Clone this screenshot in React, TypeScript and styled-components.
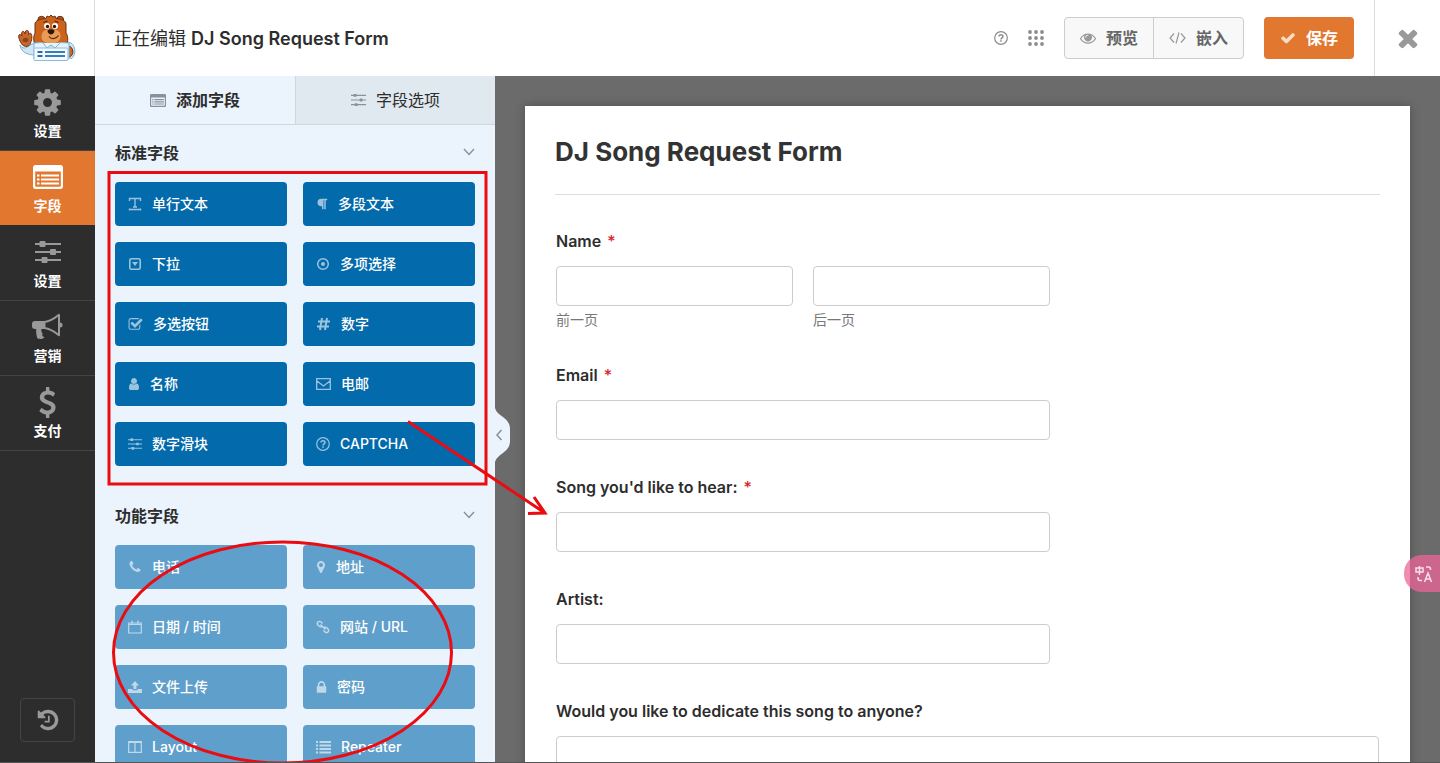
import React, { useId } from 'react';
import styled, { createGlobalStyle, css } from 'styled-components';
import { FaParagraph } from 'react-icons/fa';

const GlobalStyle = createGlobalStyle`
  * { box-sizing: border-box; }
  html, body, #root { height: 100%; }
  body {
    margin: 0;
    overflow: hidden;
    font-family: Inter, "Noto Sans CJK SC", sans-serif;
    color: #2d2d2d;
  }
  button, input, textarea { font: inherit; margin: 0; }
  button { cursor: pointer; border: 0; background: none; padding: 0; color: inherit; }
  svg { display: block; flex: none; }
`;

/* ---------- icons ---------- */

type GlyphProps = { d: string; size: number; width?: number; box?: string };
const Glyph = ({ d, size, width = size, box = '0 0 1792 1792' }: GlyphProps) => (
  <svg width={width} height={size} viewBox={box} fill="currentColor" aria-hidden="true">
    <path d={d} />
  </svg>
);

const P = {
  cog: 'M1152 896q0-106-75-181t-181-75-181 75-75 181 75 181 181 75 181-75 75-181zm512-109v222q0 12-8 23t-20 13l-185 28q-19 54-39 91 35 50 107 138 10 12 10 25t-9 23q-27 37-99 108t-94 71q-12 0-26-9l-138-108q-44 23-91 38-16 136-29 186-7 28-36 28h-222q-14 0-24.5-8.5t-11.5-21.5l-28-184q-49-16-90-37l-141 107q-10 9-25 9-14 0-25-11-126-114-165-168-7-10-7-23 0-12 8-23 15-21 51-66.5t54-70.5q-27-50-41-99l-183-27q-13-2-21-12.5t-8-23.5v-222q0-12 8-23t19-13l186-28q14-46 39-92-40-57-107-138-10-12-10-24 0-10 9-23 26-36 98.5-107.5t94.5-71.5q13 0 26 10l138 107q44-23 91-38 16-136 29-186 7-28 36-28h222q14 0 24.5 8.5t11.5 21.5l28 184q49 16 90 37l142-107q9-9 24-9 13 0 25 10 129 119 165 170 7 8 7 22 0 12-8 23-15 21-51 66.5t-54 70.5q26 50 41 98l183 28q13 2 21 12.5t8 23.5z',
  check: 'M1671 566q0 40-28 68l-724 724-136 136q-28 28-68 28t-68-28l-136-136-362-362q-28-28-28-68t28-68l136-136q28-28 68-28t68 28l294 295 656-657q28-28 68-28t68 28l136 136q28 28 28 68z',
  times: 'M1490 1322q0 40-28 68l-136 136q-28 28-68 28t-68-28l-294-294-294 294q-28 28-68 28t-68-28l-136-136q-28-28-28-68t28-68l294-294-294-294q-28-28-28-68t28-68l136-136q28-28 68-28t68 28l294 294 294-294q28-28 68-28t68 28l136 136q28 28 28 68t-28 68l-294 294 294 294q28 28 28 68z',
  eye: 'M1664 960q-152-236-381-353 61 104 61 225 0 185-131.5 316.5t-316.5 131.5-316.5-131.5-131.5-316.5q0-121 61-225-229 117-381 353 133 205 333.5 326.5t434.5 121.5 434.5-121.5 333.5-326.5zm-720-384q0-20-14-34t-34-14q-125 0-214.5 89.5t-89.5 214.5q0 20 14 34t34 14 34-14 14-34q0-86 61-147t147-61q20 0 34-14t14-34zm848 384q0 34-20 69-140 230-376.5 368.5t-499.5 138.5-499.5-139-376.5-368q-20-35-20-69t20-69q140-229 376.5-368t499.5-139 499.5 139 376.5 368q20 35 20 69z',
  history: 'M1664 896q0 156-61 298t-164 245-245 164-298 61q-172 0-327-72.5t-264-204.5q-7-10-6.5-22.5t8.5-20.5l137-138q10-9 25-9 16 2 23 12 73 95 179 147t225 52q104 0 198.5-40.5t163.5-109.5 109.5-163.5 40.5-198.5-40.5-198.5-109.5-163.5-163.5-109.5-198.5-40.5q-98 0-188 35.5t-160 101.5l137 138q31 30 14 69-17 40-59 40h-448q-26 0-45-19t-19-45v-448q0-42 40-59 39-17 69 14l130 129q107-101 244.5-156.5t284.5-55.5q156 0 298 61t245 164 164 245 61 298zm-640-288v448q0 14-9 23t-23 9h-320q-14 0-23-9t-9-23v-64q0-14 9-23t23-9h224v-352q0-14 9-23t23-9h64q14 0 23 9t9 23z',
  marker: 'M1152 640q0-106-75-181t-181-75-181 75-75 181 75 181 181 75 181-75 75-181zm256 0q0 109-33 179l-364 774q-16 33-47.5 52t-67.5 19-67.5-19-46.5-52l-365-774q-33-70-33-179 0-212 150-362t362-150 362 150 150 362z',
  user: 'M1536 1399q0 109-62.5 187t-150.5 78h-854q-88 0-150.5-78t-62.5-187q0-85 8.5-160.5t31.5-152 58.5-131 94-89 134.5-34.5q131 128 313 128t313-128q76 0 134.5 34.5t94 89 58.5 131 31.5 152 8.5 160.5zm-256-887q0 159-112.5 271.5t-271.5 112.5-271.5-112.5-112.5-271.5 112.5-271.5 271.5-112.5 271.5 112.5 112.5 271.5z',
  phone: 'M1600 1240q0 27-10 70.5t-21 68.5q-21 50-122 106-94 51-186 51-27 0-53-3.5t-57.5-12.5-47-14.5-55.5-20.5-49-18q-98-35-175-83-127-79-264-216t-216-264q-48-77-83-175-3-9-18-49t-20.5-55.5-14.5-47-12.5-57.5-3.5-53q0-92 51-186 56-101 106-122 25-11 68.5-21t70.5-10q14 0 21 3 18 6 53 76 11 19 30 54t35 63.5 31 53.5q3 4 17.5 25t21.5 35.5 7 28.5q0 20-28.5 50t-62 55-62 53-28.5 46q0 9 5 22.5t8.5 20.5 14 24 11.5 19q76 137 174 235t235 174q2 1 19 11.5t24 14 20.5 8.5 22.5 5q18 0 46-28.5t53-62 55-62 50-28.5q14 0 28.5 7t35.5 21.5 25 17.5q25 15 53.5 31t63.5 35 54 30q70 35 76 53 3 7 3 21z',
  lock: 'M640 768h512v-192q0-106-75-181t-181-75-181 75-75 181v192zm832 96v576q0 40-28 68t-68 28h-960q-40 0-68-28t-28-68v-576q0-40 28-68t68-28h32v-192q0-184 132-316t316-132 316 132 132 316v192h32q40 0 68 28t28 68z',
  checkSquare: 'M1472 930v318q0 119-84.5 203.5t-203.5 84.5h-832q-119 0-203.5-84.5t-84.5-203.5v-832q0-119 84.5-203.5t203.5-84.5h832q63 0 117 25 15 7 18 23 3 17-9 29l-49 49q-10 10-23 10-3 0-9-2-23-6-45-6h-832q-66 0-113 47t-47 113v832q0 66 47 113t113 47h832q66 0 113-47t47-113v-254q0-13 9-22l64-64q10-10 23-10 6 0 12 3 20 8 20 29zm231-489l-814 814q-24 24-57 24t-57-24l-430-430q-24-24-24-57t24-57l110-110q24-24 57-24t57 24l263 263 647-647q24-24 57-24t57 24l110 110q24 24 24 57t-24 57z',
  dollar: 'M1362 1185q0 153-99.5 263.5t-258.5 136.5v175q0 14-9 23t-23 9h-135q-13 0-22.5-9.5t-9.5-22.5v-175q-66-9-127.5-31t-101.5-44.5-74-48-46.5-37.5-17.5-18q-17-21-2-41l103-135q7-10 23-12 15-2 24 9l2 2q113 99 243 125 37 8 74 8 81 0 142.5-43t61.5-122q0-28-15-53t-33.5-42-58.5-37.5-66-32-80-32.5q-39-16-61.5-25t-61.5-26.5-62.5-31-56.5-35.5-53.5-42.5-43.5-49-35.5-58-21-66.5-8.5-78q0-138 98-242t255-134v-180q0-13 9.5-22.5t22.5-9.5h135q14 0 23 9t9 23v176q57 6 110.5 23t87 33.5 63.5 37.5 39 29 15 14q17 18 5 38l-81 146q-8 15-23 16-14 3-27-7-3-3-14.5-12t-39-26.5-58.5-32-74.5-26-85.5-11.5q-95 0-155 43t-60 111q0 26 8.5 48t29.5 41.5 39.5 33 56 31 60.5 27 70 27.5q53 20 81 31.5t76 35 75.5 42.5 62 50 53 63.5 31.5 76.5 13 94z',
};

const FormIcon = ({ width, height }: { width: number; height: number }) => (
  <svg width={width} height={height} viewBox="0 0 30 24" preserveAspectRatio="none" fill="none" aria-hidden="true">
    <rect x="1" y="1" width="28" height="22" rx="2.500" stroke="currentColor" strokeWidth="2.400" />
    <path d="M1 1h28v5.500H1z" fill="currentColor" />
    <path d="M4 10.500h2.500M8 10.500h18M4 14.500h2.500M8 14.500h18M4 18.500h2.500M8 18.500h18" stroke="currentColor" strokeWidth="2.200" />
  </svg>
);

const Sliders = ({ width, height, knob = 6 }: { width: number; height: number; knob?: number }) => (
  <svg width={width} height={height} viewBox="0 0 26 24" fill="currentColor" aria-hidden="true">
    <path d="M0 3h26v2H0zM0 11h26v2H0zM0 19h26v2H0z" />
    <rect x="4.500" y={4 - knob / 2} width={knob} height={knob} rx="1" />
    <rect x="15" y={12 - knob / 2} width={knob} height={knob} rx="1" />
    <rect x="6.500" y={20 - knob / 2} width={knob} height={knob} rx="1" />
  </svg>
);

const Bullhorn = () => (
  <svg width="31" height="28" viewBox="0 0 31 28" fill="currentColor" aria-hidden="true">
    <path d="M3 8h9v8H9.500c-.6 2 .2 3 .8 4 .6 1.100-.6 1.800.3 2.900.8.900 1.300.9 1.800 1.300-1.300 2.200-6 2.300-7.300.6C4.400 22 3.800 18.500 4.300 16H3a3 3 0 0 1-3-3v-2a3 3 0 0 1 3-3z" />
    <path d="M12.500 9C18 8.500 23 5 27 1.800v20.400C23 19 18 15.500 12.500 15z" fill="none" stroke="currentColor" strokeWidth="2" strokeLinejoin="round" />
    <path d="M28 9.500a2.500 2.500 0 0 1 0 5z" />
  </svg>
);

const Question = ({ size }: { size: number }) => (
  <svg width={size} height={size} viewBox="0 0 16 16" fill="none" stroke="currentColor" aria-hidden="true">
    <circle cx="8" cy="8" r="7.200" strokeWidth="1.400" />
    <path d="M5.700 6.300C5.800 3.400 10.300 3.500 10.300 6.200c0 1.600-2.300 1.700-2.300 3.500" strokeWidth="1.700" />
    <path d="M8 10.700v1.700" strokeWidth="1.800" />
  </svg>
);

const Line = ({ w = 14, h = 14, d, sw = 1.4 }: { w?: number; h?: number; d: string; sw?: number }) => (
  <svg width={w} height={h} viewBox={`0 0 ${w} ${h}`} fill="none" stroke="currentColor" strokeWidth={sw} aria-hidden="true">
    <path d={d} />
  </svg>
);

const Bear = () => (
  <svg width="58" height="48" viewBox="0 0 58 48" aria-hidden="true">
    <path d="M2 31c2 4 6 4 10 0l5-2v12C9 41 3 38 2 31zM50 28c8 1 9 13 3 17l-3-4z" fill="#cfe6f5" stroke="#7fb3d0" />
    <g stroke="#6b3013" strokeWidth="1">
      <path d="M4.500 31C2 28 0 23 1 21c1-1 2 0 3 1-1-3 0-5 1.500-4.500C6.500 18 7 19 7 20c0-3 1-4 2.500-3.500C11 17 10.500 19 10.500 20.500c1-2 3-1.500 3 .5 1 1 0 8-2.500 10.500-2 1.500-5 1-6.500-.5z" fill="#c9672b" />
      <path d="M50.500 32c6 1 6 11-.5 11z" fill="#c9672b" />
      <circle cx="23.500" cy="6" r="3.700" fill="#b4541f" />
      <circle cx="42" cy="6" r="3.700" fill="#b4541f" />
      <path d="M17 10c0-3 4-5 11-5.500L29 2l2 1 2-2 2 2 2-1 1 2.500c6 .5 10 2.500 10 5.500v9c3 4 2 12-2 13H19c-4-2-4-9-2-13z" fill="#cc631d" />
    </g>
    <path d="M4.500 26c1-3 6-3 6 0 0 3-6 3-6 0z" fill="#8a431b" />
    <path d="M16 29c4 0 7-1 10 0l7 3 7-3c4-1 7 0 11 0v16H16z" fill="#e6f4fb" stroke="#7fb3d0" />
    <path d="M23.500 23c0-6 4-8 9.500-8s9.500 2 9.500 7-4 7.500-9.500 7.500S23.500 27 23.500 23z" fill="#e99a55" />
    <path d="M25 29l4 5 4-3 4 3 5-5" fill="#e6f4fb" stroke="#7fb3d0" />
    <g fill="#fff"><circle cx="29" cy="12" r="3" /><circle cx="37" cy="12" r="3" /></g>
    <g fill="#2a160b">
      <circle cx="29.500" cy="12.500" r="1.700" /><circle cx="36.500" cy="12.500" r="1.700" />
      <path d="M29.500 17c0-2.500 7-2.500 7 0 0 2-2.500 3.500-3.500 3.500S29.500 19 29.500 17z" />
    </g>
    <path d="M25.500 8.500l4-1.500M36.500 7l4 1.500M31 22.500c2 3 7 3 9.500-1" fill="none" stroke="#5a260c" strokeWidth="1.300" />
    <rect x="16" y="34" width="34" height="12.500" rx="1" fill="#f2fafe" stroke="#8fbdd8" />
    <path d="M19.500 38h5M19.500 42h5" stroke="#2d6ca8" strokeWidth="1.800" />
    <path d="M27 38h20M27 42h20" stroke="#3a7fbc" strokeWidth="1.800" />
  </svg>
);

/* ---------- layout ---------- */

const Builder = styled.div`
  position: relative;
  display: flex;
  flex-direction: column;
  height: 100vh;
  overflow: hidden;
  border-bottom: 1px solid #555;
`;

const Header = styled.header`
  display: flex;
  flex: none;
  align-items: center;
  height: 76px;
  background: #fff;
`;

const Logo = styled.div`
  display: flex;
  align-items: center;
  justify-content: center;
  width: 95px;
  height: 100%;
  border-right: 1px solid #dcdcdc;
`;

const HeaderTitle = styled.div`
  flex: 1;
  padding: 2px 0 0 19px;
  font-size: 18px;
  line-height: 24px;
  strong { font-weight: 600; }
`;

const HeaderTools = styled.div`
  display: flex;
  align-items: center;
  gap: 20px;
  padding-right: 20px;
  color: #8c8c8c;
`;

const IconButton = styled.button`
  display: flex;
  align-items: center;
  justify-content: center;
`;

const ButtonGroup = styled.div`
  display: flex;
  height: 42px;
  border: 1px solid #ccc;
  border-radius: 4px;
  background: #f8f8f8;
  overflow: hidden;
`;

const GroupButton = styled.button`
  display: flex;
  align-items: center;
  justify-content: center;
  gap: 10px;
  width: 88px;
  color: #999;
  font-size: 16px;
  font-weight: 600;
  & + & { width: 90px; border-left: 1px solid #ccc; }
  span { padding-bottom: 2px; color: #666; }
`;

const SaveButton = styled.button`
  display: flex;
  align-items: center;
  justify-content: center;
  gap: 10px;
  width: 90px;
  height: 42px;
  border-radius: 4px;
  background: #e27730;
  color: #fbdcc4;
  font-size: 16px;
  font-weight: 600;
  span { padding-bottom: 2px; color: #fff; }
`;

const CloseButton = styled(IconButton)`
  width: 66px;
  height: 100%;
  border-left: 1px solid #dcdcdc;
  color: #999;
`;

const Body = styled.div`
  display: flex;
  flex: 1;
  min-height: 0;
`;

const Rail = styled.nav`
  display: flex;
  flex: none;
  flex-direction: column;
  align-items: center;
  width: 95px;
  padding-bottom: 20px;
  background: #2d2d2d;
`;

const RailItem = styled.button<{ $active?: boolean }>`
  display: flex;
  flex-direction: column;
  align-items: center;
  width: 100%;
  height: 75px;
  padding-top: 10px;
  border-bottom: 1px solid #444;
  color: #999;
  font-size: 14px;
  line-height: 20px;
  font-weight: 600;
  span { color: #fff; }
  ${(p) => p.$active && css`
    background: #e27730;
    color: #fff;
    border-color: #2d2d2d;
  `}
`;

const RailIcon = styled.i`
  display: flex;
  align-items: center;
  justify-content: center;
  height: 32px;
  margin-bottom: 3px;
`;

const HistoryButton = styled(IconButton)`
  width: 55px;
  height: 44px;
  margin-top: auto;
  border: 1px solid #444;
  border-radius: 4px;
  color: #999;
`;

const Panel = styled.aside`
  position: relative;
  flex: none;
  width: 400px;
  background: #ebf3fc;
`;

const PanelScroll = styled.div`
  height: 100%;
  overflow: hidden;
`;

const Tabs = styled.div`
  display: grid;
  grid-template-columns: 1fr 1fr;
  height: 49px;
  border-bottom: 1px solid #ced7e0;
`;

const Tab = styled.button<{ $active?: boolean }>`
  display: flex;
  align-items: center;
  justify-content: center;
  gap: 10px;
  color: #86919e;
  font-size: 16px;
  background: ${(p) => (p.$active ? 'transparent' : '#e0e8f0')};
  border-left: ${(p) => (p.$active ? '0' : '1px solid #ced7e0')};
  font-weight: ${(p) => (p.$active ? 600 : 400)};
  span { padding-bottom: 2px; color: #2d2d2d; }
`;

const Group = styled.section`
  padding: 0 20px 22px;
`;

const GroupHeading = styled.button`
  display: flex;
  align-items: center;
  justify-content: space-between;
  width: 100%;
  height: 57px;
  padding-bottom: 3px;
  font-size: 16px;
  font-weight: 600;
  color: #2d2d2d;
  svg { color: #86919e; }
`;

const FieldGrid = styled.div`
  display: grid;
  grid-template-columns: 1fr 1fr;
  gap: 16px;
`;

const FieldButton = styled.button<{ $light?: boolean }>`
  display: flex;
  align-items: center;
  gap: 10px;
  height: 44px;
  padding-left: 13px;
  border-radius: 4px;
  background: ${(p) => (p.$light ? '#5f9fcb' : '#036aab')};
  color: ${(p) => (p.$light ? '#bfd9ea' : '#9bc3dd')};
  font-size: 14px;
  font-weight: 500;
  span { padding-bottom: 2px; color: #fff; }
`;

const Handle = styled.button`
  position: absolute;
  top: 332px;
  left: 100%;
  color: #86919e;
`;

const Main = styled.main`
  flex: 1;
  min-width: 0;
  padding: 30px 30px 0;
  overflow: hidden;
  background: #6b6b6b;
`;

const Sheet = styled.form`
  min-height: 100%;
  padding: 30px;
  background: #fff;
  box-shadow: 0 0 10px rgba(0, 0, 0, 0.25);
`;

const SheetTitle = styled.h1`
  margin: 0;
  height: 59px;
  border-bottom: 1px solid #ddd;
  font-size: 26px;
  line-height: 32px;
  font-weight: 700;
  color: #333;
`;

const Fields = styled.div`
  display: flex;
  flex-direction: column;
  gap: 37px;
  padding: 36px 1px 0;
`;

const Field = styled.div`
  display: flex;
  flex-direction: column;
`;

const Label = styled.label`
  margin-bottom: 15px;
  font-size: 16px;
  line-height: 20px;
  font-weight: 600;
  color: #2d2d2d;
  em { margin-left: 2px; color: #d6252b; font-style: normal; font-weight: 500; }
`;

const box = css`
  display: block;
  height: 40px;
  padding: 0 10px;
  border: 1px solid #ccc;
  border-radius: 4px;
  background: #fff;
`;
const Input = styled.input`${box} width: 60%;`;
const TextArea = styled.textarea`${box} width: 100%; height: 120px; resize: none;`;

const NameRow = styled.div`
  display: grid;
  grid-template-columns: 1fr 1fr;
  gap: 20px;
  width: 60%;
  ${Input} { width: 100%; }
`;

const SubLabel = styled.label`
  display: block;
  margin-top: 5px;
  font-size: 14px;
  line-height: 17px;
  color: #777;
`;

const Translate = styled.button`
  position: absolute;
  right: 0;
  top: 555px;
  display: flex;
  align-items: center;
  width: 36px;
  height: 37px;
  padding-left: 11px;
  border-radius: 18px 0 0 18px;
  background: rgba(236, 100, 152, 0.75);
  color: #f6dfe8;
`;

const Markup = styled.svg`
  position: absolute;
  top: 0;
  left: 0;
  pointer-events: none;
`;

/* ---------- data ---------- */

const standard: [React.ReactNode, string][] = [
  [<Line d="M1.500 4V1.500h11V4M7 1.500v8.500M5 10h4M1 12.500h12M1.500 11.500v2M12.500 11.500v2" />, '单行文本'],
  [<FaParagraph size={12} />, '多段文本'],
  [<svg width="14" height="14" viewBox="0 0 14 14" aria-hidden="true"><rect x="1.800" y="1.800" width="10.400" height="10.400" rx="1.500" fill="none" stroke="currentColor" strokeWidth="1.600" /><path d="M4 5h6l-3 4z" fill="currentColor" /></svg>, '下拉'],
  [<svg width="14" height="14" viewBox="0 0 14 14" aria-hidden="true"><circle cx="7" cy="7" r="5.300" fill="none" stroke="currentColor" strokeWidth="1.500" /><circle cx="7" cy="7" r="2" fill="currentColor" /></svg>, '多项选择'],
  [<Glyph d={P.checkSquare} size={15} />, '多选按钮'],
  [<Line w={15} d="M6 1l-2 12M11 1L9 13M2 4.500h12M1 9.500h12" sw={2} />, '数字'],
  [<Glyph d={P.user} size={14} width={12} box="128 0 1536 1792" />, '名称'],
  [<Line w={15} h={12} d="M.7.700h13.600v10.600H.7zM1 3l6.500 5L14 3" sw={1.300} />, '电邮'],
  [<Sliders width={14} height={14} knob={5} />, '数字滑块'],
  [<Question size={14} />, 'CAPTCHA'],
];

const fancy: [React.ReactNode, string][] = [
  [<Glyph d={P.phone} size={14} />, '电话'],
  [<Glyph d={P.marker} size={14} width={10} box="256 0 1280 1792" />, '地址'],
  [<Line d="M.7 3h12.600v10H.7zM.7 4.500h12.600M4 .500v3.500M10 .500v3.500" sw={1.200} />, '日期 / 时间'],
  [<Line d="M6.500 3.500L5 2a2 2 0 0 0-3 3l1.500 1.500a2 2 0 0 0 3-1M4.500 4.500l5 5M7.500 8.500a2 2 0 0 1 3-1L12 9a2 2 0 0 1-3 3l-1.500-1.500" sw={1.500} />, '网站 / URL'],
  [<svg width="14" height="14" viewBox="0 0 14 14" fill="currentColor" aria-hidden="true"><path d="M7 1l4 4.500H8.500V9h-3V5.500H3zM0 9h4.500v1.200h5V9H14v4H0z" /></svg>, '文件上传'],
  [<Glyph d={P.lock} size={14} width={11} box="256 0 1280 1700" />, '密码'],
  [<Line d="M.7 1.700h12.600v10.600H.7zM7 1.700v10.600M.7 2.500h12.600" sw={1.200} />, 'Layout'],
  [<Line w={15} d="M0 2h2M0 5.500h2M0 9h2M0 12.500h2M3.500 2H15M3.500 5.500H15M3.500 9H15M3.500 12.500H15" sw={2} />, 'Repeater'],
];

const rail: { icon: React.ReactNode; label: string; active?: boolean }[] = [
  { icon: <Glyph d={P.cog} size={31} />, label: '设置' },
  { icon: <FormIcon width={30} height={24} />, label: '字段', active: true },
  { icon: <Sliders width={26} height={24} />, label: '设置' },
  { icon: <Bullhorn />, label: '营销' },
  { icon: <Glyph d={P.dollar} size={31} />, label: '支付' },
];

/* ---------- parts ---------- */

const FieldGroup = ({ title, items, light }: { title: string; items: [React.ReactNode, string][]; light?: boolean }) => (
  <Group>
    <GroupHeading type="button">
      {title}
      <Line w={12} h={8} d="M1 1l5 5.500L11 1" />
    </GroupHeading>
    <FieldGrid>
      {items.map(([icon, label]) => (
        <FieldButton key={label} type="button" $light={light}>
          {icon}
          <span>{label}</span>
        </FieldButton>
      ))}
    </FieldGrid>
  </Group>
);

const TextField = ({ label, required, long }: { label: string; required?: boolean; long?: boolean }) => {
  const id = useId();
  return (
    <Field>
      <Label htmlFor={id}>{label} {required && <em>*</em>}</Label>
      {long ? <TextArea id={id} /> : <Input id={id} type="text" />}
    </Field>
  );
};

export default function App() {
  return (
    <Builder>
      <GlobalStyle />
      <Header>
        <Logo><Bear /></Logo>
        <HeaderTitle>正在编辑 <strong>DJ Song Request Form</strong></HeaderTitle>
        <HeaderTools>
          <IconButton type="button" aria-label="帮助"><Question size={14} /></IconButton>
          <IconButton type="button" aria-label="菜单">
            <svg width="16" height="16" viewBox="0 0 16 16" fill="currentColor" aria-hidden="true">
              {[2, 8, 14].map((y) => [2, 8, 14].map((x) => <circle key={`${x}-${y}`} cx={x} cy={y} r="1.900" />))}
            </svg>
          </IconButton>
          <ButtonGroup>
            <GroupButton type="button"><Glyph d={P.eye} size={16} /><span>预览</span></GroupButton>
            <GroupButton type="button">
              <Line w={17} h={12} d="M5 1.500L1 6l4 4.500M12 1.500L16 6l-4 4.500M10 .5L7 11.500" sw={1.200} />
              <span>嵌入</span>
            </GroupButton>
          </ButtonGroup>
          <SaveButton type="button"><Glyph d={P.check} size={16} /><span>保存</span></SaveButton>
        </HeaderTools>
        <CloseButton type="button" aria-label="关闭"><Glyph d={P.times} size={28} /></CloseButton>
      </Header>
      <Body>
        <Rail>
          {rail.map((item, i) => (
            <RailItem key={i} type="button" $active={item.active}>
              <RailIcon>{item.icon}</RailIcon>
              <span>{item.label}</span>
            </RailItem>
          ))}
          <HistoryButton type="button" aria-label="历史"><Glyph d={P.history} size={24} /></HistoryButton>
        </Rail>
        <Panel>
          <PanelScroll>
            <Tabs>
              <Tab type="button" $active><FormIcon width={16} height={13} /><span>添加字段</span></Tab>
              <Tab type="button"><Sliders width={15} height={14} knob={5} /><span>字段选项</span></Tab>
            </Tabs>
            <FieldGroup title="标准字段" items={standard} />
            <FieldGroup title="功能字段" items={fancy} light />
          </PanelScroll>
          <Handle type="button" aria-label="收起">
            <svg width="15" height="54" viewBox="0 0 15 54" aria-hidden="true">
              <path d="M0 0c1 4 4 6 8 9 5 4 7 7 7 12v12c0 5-2 8-7 12-4 3-7 5-8 9z" fill="#ebf3fc" />
              <path d="M6.500 22L2 27l4.500 5" fill="none" stroke="currentColor" strokeWidth="1.500" />
            </svg>
          </Handle>
        </Panel>
        <Main>
          <Sheet>
            <SheetTitle>DJ Song Request Form</SheetTitle>
            <Fields>
              <Field>
                <Label htmlFor="first">Name <em>*</em></Label>
                <NameRow>
                  <div><Input id="first" type="text" /><SubLabel htmlFor="first">前一页</SubLabel></div>
                  <div><Input id="last" type="text" /><SubLabel htmlFor="last">后一页</SubLabel></div>
                </NameRow>
              </Field>
              <TextField label="Email" required />
              <TextField label="Song you'd like to hear:" required />
              <TextField label="Artist:" />
              <TextField label="Would you like to dedicate this song to anyone?" long />
            </Fields>
          </Sheet>
        </Main>
      </Body>
      <Translate type="button" aria-label="翻译">
        <Line w={18} h={18} d="M1 3h7v4H1zM4.500 1v9M11 2h2.500a2 2 0 0 1 2 2v1M3 12v1.500a2 2 0 0 0 2 2h2M9.500 17l3.500-9 3.500 9M10.700 14h4.600" sw={1.500} />
      </Translate>
      <Markup width="560" height="763" viewBox="0 0 560 763" fill="none" stroke="#ea0c10" strokeWidth="3" aria-hidden="true">
        <rect x="109" y="172.500" width="377" height="311.500" />
        <ellipse cx="282.500" cy="652.500" rx="169" ry="110.500" />
        <path d="M408 421.500L545 513M534 497l11 16-17 .500" />
      </Markup>
    </Builder>
  );
}
